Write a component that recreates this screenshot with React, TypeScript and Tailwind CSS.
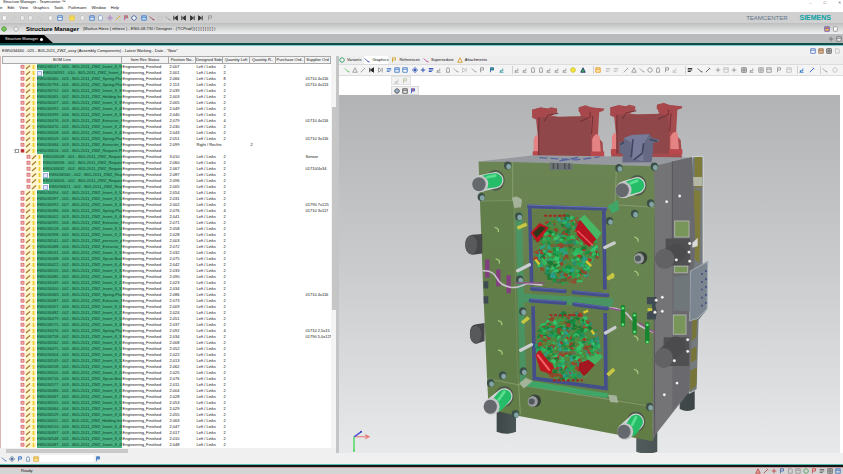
import { useState } from "react";

const suppliers: Record<number, string> = {
  2: "01710 4x116", 3: "01710 4x113", 9: "01710 4x116", 12: "01710 3x116", 15: "Sensor", 17: "01710/4x34",
  23: "01790 7x125", 24: "01710 3x117", 38: "01710 4x116", 44: "01710 2,5x15", 45: "01790 5,0x125",
};

const positions = [
  "2.007", "2.001", "2.066", "2.113", "2.039", "2.003", "2.005", "2.049", "2.040", "2.079", "2.030", "2.043", "2.051",
  "2.099", "", "3.010", "2.060", "2.067", "2.087", "2.096", "2.005", "2.054", "2.031", "2.002", "2.076", "2.041",
  "2.071", "2.058", "2.028", "2.003", "2.072", "2.032", "2.075", "2.042", "2.033", "2.090", "2.023", "2.034", "2.086",
  "2.073", "2.009", "2.024", "2.051", "2.037", "2.092", "2.034", "2.008", "2.052", "2.022", "2.013", "2.062", "2.025",
  "2.076", "2.011", "2.004", "2.028", "2.053", "2.029", "2.055", "2.063", "2.047", "2.017", "2.010", "2.048", "2.021",
];

const names = [
  "34517 - 005 - B05-2011_ZWZ_Insert_fl_96", "34392 - 010 - B05-2011_ZWZ_Insert_fl", "34460 - 003 - B05-2011_ZWZ_Spring-Plug",
  "31793 - 001 - B05-2011_ZWZ_Spring-Plug", "34752 - 002 - B05-2011_ZWZ_Insert_fl_38", "34465 - 002 - B05-2011_ZWZ_Holding Ins",
  "34427 - 005 - B05-2011_ZWZ_Insert_fl_39", "34392 - 003 - B05-2011_ZWZ_Insert_fl_48", "34399 - 006 - B05-2011_ZWZ_Insert_fl_36",
  "34476 - 003 - B05-2011_ZWZ_Extractor_fl", "34470 - 002 - B05-2011_ZWZ_Insert_fl_29", "34508 - 003 - B05-2011_ZWZ_Insert_fl_42",
  "34509 - 002 - B05-2011_ZWZ_Spring-Plug", "34464 - 003 - B05-2011_ZWZ_Extractor_fl", "34616 - 002 - B05-2011_ZWZ_Request-Pl",
  "34538 - 001 - B05-2011_ZWZ_Request", "34596 - 002 - B05-2011_ZWZ_Request", "34632 - 002 - B05-2011_ZWZ_Request",
  "34560 - 002 - B05-2011_ZWZ_Reque", "34626 - 002 - B05-2011_ZWZ_Request", "34621 - 002 - B05-2011_ZWZ_Reque",
  "34494 - 002 - B05-2011_ZWZ_Insert_fl_52", "34397 - 005 - B05-2011_ZWZ_Insert_fl_54", "34392 - 007 - B05-2011_ZWZ_Insert_fl_31",
  "34486 - 003 - B05-2011_ZWZ_Spring-Plug", "34402 - 003 - B05-2011_ZWZ_Insert_fl_40", "34395 - 004 - B05-2011_ZWZ_Extractor_fl",
  "34518 - 004 - B05-2011_ZWZ_Insert_fl_58", "34398 - 002 - B05-2011_ZWZ_Insert_fl_27", "34541 - 002 - B05-2011_ZWZ_pressure_pl",
  "34488 - 004 - B05-2011_ZWZ_Extractor_fl", "34531 - 003 - B05-2011_ZWZ_Insert_fl_31", "34468 - 003 - B05-2011_ZWZ_Sprue-Bush",
  "34422 - 002 - B05-2011_ZWZ_Insert_fl_41", "34555 - 002 - B05-2011_ZWZ_Insert_fl_32", "34485 - 002 - B05-2011_ZWZ_Insert_fl_39",
  "34449 - 002 - B05-2011_ZWZ_Insert_fl_22", "34400 - 002 - B05-2011_ZWZ_Insert_fl_33", "34463 - 003 - B05-2011_ZWZ_Spring-Plug",
  "34487 - 002 - B05-2011_ZWZ_Extractor_fl", "34457 - 003 - B05-2011_ZWZ_Insert_fl_08", "34482 - 002 - B05-2011_ZWZ_Insert_fl_23",
  "34479 - 002 - B05-2011_ZWZ_Insert_fl_50", "34575 - 002 - B05-2011_ZWZ_Insert_fl_36", "34476 - 002 - B05-2011_ZWZ_Spring-Plug",
  "34758 - 002 - B05-2011_ZWZ_Insert_fl_33", "34562 - 005 - B05-2011_ZWZ_Insert_fl_07", "34475 - 004 - B05-2011_ZWZ_Insert_fl_51",
  "34404 - 002 - B05-2011_ZWZ_Insert_fl_21", "34549 - 002 - B05-2011_ZWZ_Insert_fl_12", "34558 - 002 - B05-2011_ZWZ_Insert_fl_61",
  "34505 - 006 - B05-2011_ZWZ_Insert_fl_24", "34716 - 003 - B05-2011_ZWZ_Sprue-Bush", "34577 - 003 - B05-2011_ZWZ_Insert_fl_10",
  "34480 - 002 - B05-2011_ZWZ_Insert_fl_03", "34467 - 002 - B05-2011_ZWZ_Insert_fl_25", "34555 - 003 - B05-2011_ZWZ_Insert_fl_52",
  "34464 - 004 - B05-2011_ZWZ_Insert_fl_28", "34529 - 002 - B05-2011_ZWZ_Insert_fl_02", "34411 - 002 - B05-2011_ZWZ_Holding Ins",
  "34510 - 003 - B05-2011_ZWZ_Insert_fl_46", "34497 - 003 - B05-2011_ZWZ_Insert_fl_16", "34548 - 002 - B05-2011_ZWZ_Insert_fl_09",
  "34487 - 002 - B05-2011_ZWZ_Insert_fl_45",
];

const menus = ["File", "Edit", "View", "Graphics", "Tools", "Pathmann", "Window", "Help"];

const shapes: Record<string, string> = {
  page: "M2 1h4l1 1v5H2z",
  box: "M1 1h6v6H1zM1 3h6",
  pen: "M1 7l5-5M5 1l2 2",
  line: "M1 2l3 3 3 2M6 6h1",
  circle: "M4 1a3 3 0 1 0 .1 0",
  cross: "M4 1v6M1 4h6",
  move: "M4 0v8M0 4h8M2 2l4 4M6 2l-4 4",
  arrow: "M1 5h4V2M3 5l-2 2h5",
  arch: "M2 7V3a2 2 0 0 1 4 0v4H2",
  prev: "M1 1v6M6 1L2 4l4 3z",
  next: "M7 1v6M2 1l4 3-4 3z",
  grid: "M1 1h6v6H1zM4 1v6M1 4h6",
  flag: "M2 7V1h4v3H2",
  bars: "M1 2h6M1 4h6M1 6h4",
  tri: "M1 7l3-6 3 6z",
};

type Item = [string, string, string?];

function Glyph({ kind, color, fill }: { kind: string; color: string; fill?: string }) {
  return (
    <svg viewBox="0 0 8 8" className="size-[6px] shrink-0" fill={fill || "none"} stroke={color} strokeWidth="1.2">
      <path d={shapes[kind]} />
    </svg>
  );
}

function Tools({ items, className }: { items: Item[]; className: string }) {
  return (
    <div className={"flex shrink-0 items-center " + className}>
      {items.map(([kind, color, fill], i) => (
        <button key={i} type="button" aria-label={kind} className="flex h-2 w-2 shrink-0 items-center justify-center">
          <Glyph kind={kind} color={color} fill={fill} />
        </button>
      ))}
    </div>
  );
}

const G = "#9a9a9a";
const L = "#c3c3c3";
const B = "#4b7dc4";

const mainTools: { cls: string; items: Item[] }[] = [
  { cls: "", items: [["page", L, "#fff"]] },
  { cls: "ml-0.5", items: [["pen", L], ["page", L, "#eee"], ["page", L, "#eee"]] },
  { cls: "ml-0.5", items: [["line", L]] },
  { cls: "ml-0.5", items: [["page", L, "#f5f5f5"]] },
  { cls: "ml-0.5", items: [["box", B, "#fff"]] },
  { cls: "ml-1", items: [["box", "#e3c74e", "#ffe25c"]] },
  { cls: "ml-0.5", items: [["page", L, "#eee"]] },
  { cls: "ml-0.5", items: [["box", B, "#dfe9f7"], ["page", "#86a5d4", "#fff"]] },
  { cls: "ml-0.5", items: [["move", "#b08cc4"], ["pen", "#dca82e"], ["flag", "#c55b9c", "#8dad53"], ["circle", "#375b99", "#fff"]] },
  { cls: "ml-0.5", items: [["box", B, "#bcdcf5"], ["line", "#a63946"], ["circle", L], ["line", G]] },
  { cls: "", items: [["prev", "#333", "#333"], ["prev", "#333", "#333"], ["next", "#333", "#333"], ["next", "#333", "#333"]] },
  { cls: "ml-0.5", items: [["flag", G]] },
];

const viewTools: { cls: string; items: Item[] }[] = [
  { cls: "ml-1", items: [["line", "#5fbf62"], ["tri", G], ["pen", G]] },
  { cls: "ml-px", items: [["prev", "#222", "#222"], ["next", G]] },
  { cls: "ml-px", items: [["bars", B], ["box", B, "#e5eefc"], ["box", B, "#fff"]] },
  { cls: "ml-0.5", items: [["move", "#3558b5"], ["cross", "#244bb5"], ["bars", "#244bb5"], ["arrow", G]] },
  { cls: "ml-px", items: [["arch", G], ["line", G], ["next", L]] },
  { cls: "ml-0.5", items: [["line", G], ["flag", G]] },
  { cls: "ml-0.5", items: [["flag", "#2f69aa", "#42ad5a"]] },
  { cls: "ml-0.5", items: [["arrow", "#3c9aa7"]] },
  { cls: "ml-1.5 border-l border-[#d0d0d0]", items: [["arrow", G], ["arrow", G], ["arch", G], ["arch", G], ["arrow", G], ["arrow", G], ["arrow", G], ["circle", "#c7ba23", "#f7ec3d"]] },
  { cls: "ml-0.5", items: [["tri", "#263f77", "#38a950"]] },
  { cls: "ml-1.5 border-l border-[#d0d0d0]", items: [["box", "#e5a03b", "#ffe9a8"]] },
  { cls: "ml-0.5", items: [["bars", L], ["bars", L]] },
  { cls: "ml-0.5", items: [["pen", G], ["tri", G], ["line", G], ["circle", G], ["arch", G]] },
  { cls: "ml-px", items: [["flag", G], ["arrow", L]] },
  { cls: "ml-1.5 border-l border-[#d0d0d0]", items: [["bars", "#222"]] },
  { cls: "ml-0.5", items: [["line", "#555"], ["pen", "#555"]] },
  { cls: "ml-0.5", items: [["cross", G], ["box", L], ["cross", G]] },
  { cls: "ml-0.5", items: [["grid", "#777"], ["arrow", G]] },
  { cls: "ml-px", items: [["grid", G], ["box", G]] },
  { cls: "ml-0.5", items: [["flag", G]] },
  { cls: "ml-0.5", items: [["box", L]] },
  { cls: "ml-1 border-l border-[#d0d0d0]", items: [["arrow", "#2d79c8"]] },
  { cls: "ml-0.5", items: [["pen", "#2d5fc8"]] },
  { cls: "ml-1 border-l border-[#d0d0d0]", items: [["line", G]] },
  { cls: "ml-0.5", items: [["circle", L]] },
];

const tabs: [string, string, string][] = [
  ["Variants", "circle", "#2b9c63"],
  ["Graphics", "line", "#3146b5"],
  ["References", "flag", "#d0a72e"],
  ["Supersedure", "line", "#bb4796"],
  ["Attachments", "tri", "#d99c29"],
];

function BomRow({ index }: { index: number }) {
  const child = index > 14 && index < 21;
  const marked = index === 1 || index === 18 || index === 20;
  const right = index === 13;
  const blank = index === 14;
  return (
    <tr className="h-[6px] leading-[6px]">
      <td className="p-0">
        <div className={"flex h-[6px] items-center " + (child ? "pl-[23px]" : "pl-[11px]")}>
          {!child && (
            <span className="flex w-[6px] shrink-0 items-center border-l border-dotted border-[#c8c8c8]">
              {blank && <span className="size-1 border border-[#999] bg-white" />}
            </span>
          )}
          <svg viewBox="0 0 17 6" className="h-[6px] w-[17px] shrink-0">
            <rect x="1" y="1.2" width="3" height="3" fill={blank ? "#b02027" : "#f0b3b3"} stroke="#d25a5a" strokeWidth="0.7" />
            <rect x="5" y="0" width="11" height="6" fill="#fff8cf" />
            <path d="M6 5l4-3.5" stroke="#a97a35" strokeWidth="1.3" />
            <path d="M13.500 1v4" stroke="#f0cc2c" strokeWidth="1.800" />
          </svg>
          {marked && <span className="mr-px size-[5px] shrink-0 border border-[#9fb0e0] bg-[#e4eafc]" />}
          <span className="h-[6px] min-w-0 flex-1 overflow-hidden whitespace-nowrap bg-[#48b283] text-[#0b3a25]">
            {"EW00" + names[index]}
          </span>
        </div>
      </td>
      <td className="p-0 pl-px whitespace-nowrap">Engineering_Finished</td>
      <td className="p-0 pl-px">{positions[index]}</td>
      <td className="p-0 pl-px whitespace-nowrap">{blank ? "" : right ? "Right / Rechts" : "Left / Links"}</td>
      <td className="p-0 pl-px">{blank || right ? "" : index === 2 ? "8" : [9, 24, 44].includes(index) ? "4" : "2"}</td>
      <td className="p-0 pl-px">{right ? "2" : ""}</td>
      <td className="p-0" />
      <td className="p-0 pl-px whitespace-nowrap">{suppliers[index]}</td>
    </tr>
  );
}

// small repeatable generator, so the cavity clutter looks the same on each render
function scatter(seed: number, count: number) {
  let s = seed;
  const rnd = () => {
    s = (s * 16807) % 2147483647;
    return s / 2147483647;
  };
  const palette = ["#21a552", "#2fb85f", "#179044", "#35c26b", "#2a8f6b", "#5d7f35", "#8a4a2b", "#a3402a", "#2aa08c", "#1c7a34"];
  return Array.from({ length: count }, () => {
    const a = rnd() * Math.PI * 2;
    const r = Math.pow(rnd(), 0.5);
    const x = Math.cos(a) * r * 96;
    const y = Math.sin(a) * r * 104;
    const w = 6 + rnd() * 18;
    const h = 3 + rnd() * 6;
    return { x, y, w, h, rot: rnd() * 80 - 60, color: palette[Math.floor(rnd() * palette.length)] };
  });
}

function Cavity({ cx, cy, seed }: { cx: number; cy: number; seed: number }) {
  return (
    <g transform={`translate(${cx} ${cy})`}>
      <ellipse rx="82" ry="94" fill="#4f8a45" />
      {scatter(seed, 420).map((p, i) => (
        <path
          key={i}
          d={`M${-p.w / 2} 0L0 ${-p.h}L${p.w / 2} ${-p.h / 3}L${p.w / 4} ${p.h}Z`}
          transform={`translate(${p.x} ${p.y}) rotate(${p.rot})`}
          fill={p.color}
        />
      ))}
    </g>
  );
}

function Pin({ x, y, dx, dy }: { x: number; y: number; dx: number; dy: number }) {
  return (
    <g strokeLinecap="round">
      <ellipse cx={x + dx} cy={y + dy} rx="28" ry="31" fill="#4d5a48" />
      <path d={`M${x} ${y}L${x + dx} ${y + dy}`} stroke="#cfd3d3" strokeWidth="49" />
      <path d={`M${x + 15} ${y - 5}L${x + dx} ${y + dy}`} stroke="#26bd68" strokeWidth="42" />
      <path d={`M${x + 18} ${y - 18}L${x + dx} ${y + dy - 14}`} stroke="#5be092" strokeWidth="8" />
      <ellipse cx={x - 3} cy={y + 2} rx="24" ry="25" fill="#c3c5c7" />
      <ellipse cx={x - 7} cy={y + 3} rx="20" ry="21" fill="#65696d" />
    </g>
  );
}

function Clamp() {
  return (
    <g>
      <path d="M248 62l25-7 22 3 10-4 18 4v12l-18 9 22 4 66-2 2-9-8-6 1-12 20-6 20 7 36 3-2 7-13 4-4 75 14 15 4 56H250l6-60 10-7-6-57-12-5z" fill="#a54a4d" />
      <path d="M268 84l154-2 4 118H266z" fill="#90474a" />
      <path d="M248 62l25-7 22 3-10 22-21 10zM388 54l20-2 54 8-34 15-4 18-32-18z" fill="#a8484c" />
      <path d="M284 96l12-18 30-6M392 97l30-14V68" fill="none" stroke="#703237" strokeWidth="3" />
      <path d="M253 150q8-20 14-8v45h-14zM428 150q10-23 22-10l4 48h-26z" fill="#e58384" />
      <path d="M250 187h18v15h-18zM424 187h40v15h-40z" fill="#b9474c" />
      <path d="M268 84v116M430 80l-4 55" stroke="#6e3338" strokeWidth="3" />
    </g>
  );
}

function MouldModel() {
  return (
    <svg viewBox="340 96 500 357" preserveAspectRatio="xMidYMid meet" className="h-full w-full" role="img" aria-label="Mould assembly">
      <defs>
        <linearGradient id="leg" x1="0" x2="1">
          <stop offset="0" stopColor="#3d4748" />
          <stop offset="0.35" stopColor="#6e797a" />
          <stop offset="1" stopColor="#3c4445" />
        </linearGradient>
        <linearGradient id="face" x1="0" y1="0" x2="0" y2="1">
          <stop offset="0" stopColor="#6b8453" />
          <stop offset="1" stopColor="#617c45" />
        </linearGradient>
      </defs>
      <g transform="translate(450 90) scale(0.33333)">
        {/* legs and rear columns */}
        <path d="M142 960h58v66q-29 12-58 0zM560 1020h63v66q-31 10-63 0zM690 900h45v58q-22 12-45 0z" fill="url(#leg)" />
        <path d="M728 203h32v330h14l-2 128-24 30-6 208-24 12z" fill="#747a7d" stroke="#eceded" strokeWidth="2" />
        <path d="M735 203h22v92h-22zM733 300l20 6-4 215-16-15z" fill="#7f7b3b" />
        <path d="M730 263h28v27h-28z" fill="#b5b7a6" />
        <path d="M722 690l20-8-2 60-20 18zM720 780l20-10v40l-20 10zM718 845l24-12-2 55-22 16z" fill="#77753a" />
        <Clamp />
        <g transform="translate(234 -7)"><Clamp /></g>
        {/* block */}
        <path d="M88 217l165-19 475 7-113 27z" fill="#969a9e" />
        <path d="M270 205l110 7 70-9M330 215l60-11" stroke="#5663a2" strokeWidth="4" fill="none" strokeDasharray="24 9" />
        <path d="M613 230l114-26 10 240-17 460-102 130-10 20z" fill="#747477" />
        <path d="M668 217l60-13 8 240-18 460-50 60z" fill="#6a6a6e" />
        <path d="M668 217v280M613 375l2 660" stroke="#56565a" strokeWidth="3" />
        <path d="M88 217l102 1 423 13 2 120-6 703-404-76-87-19-5-100-13-301-8-225z" fill="url(#face)" />
        <path d="M190 219v115l-95 2M193 334l10 470 10 170M113 867l88 17 400 65M501 226l-5 120 118 8" fill="none" stroke="#95a780" strokeWidth="2" />
        <path d="M93 336l100-2 20 547-98-16z" fill="#5e7d47" opacity="0.6" />
        <path d="M482 350l132 5-8 590-126-22z" fill="#668550" opacity="0.8" />
        <path d="M198 370l20-2 12 505-18 10zM212 612l280 15-5 26-270-15z" fill="#419a69" opacity="0.75" />
        <path d="M238 872l240 39-6 14-248-36zM475 350l30-18 4 30-22 10z" fill="#3fa668" />
        <path d="M301 220l68 3v19h-68z" fill="#6c7376" />
        <path d="M312 222v17M325 222v17M346 222v17M359 222v17" stroke="#454b4c" strokeWidth="4" />

        {/* cavities */}
        <path d="M248 360l212 5 2 260-214-12z" fill="#647d48" />
        <path d="M250 640l216 19v230l-208-28z" fill="#647d48" />
        <path d="M234 351l238 8M241 352l6 236M463 360l3 240" stroke="#434e8b" strokeWidth="11" fill="none" />
        <path d="M235 347l237 8" stroke="#6873b2" strokeWidth="3" />
        <path d="M248 598l98 7M372 608l102 9M244 633l102 7M374 644l98 13" stroke="#434e8b" strokeWidth="12" strokeLinecap="round" />
        <path d="M248 594l98 7M372 604l102 9M244 629l102 7M374 640l98 13" stroke="#6773b4" strokeWidth="2" />
        <path d="M251 650l4 216 214 30-2-226" stroke="#434e8b" strokeWidth="11" fill="none" />
        <Cavity cx={350} cy={480} seed={431} />
        <Cavity cx={356} cy={770} seed={977} />
        <path d="M243 430l28-29 27 14-34 45z" fill="#bd1621" />
        <path d="M251 430l22-20 16 6-27 28z" fill="#30361a" />
        <path d="M378 419l18-38 56 55-33 37-32-30z" fill="#b5131f" />
        <path d="M389 388l16-12 51 55-14 20z" fill="#47b763" />
        <path d="M384 424l46 44" stroke="#f25562" strokeWidth="4" />
        <path d="M258 795l13-13 42 50-9 21-31-10z" fill="#bd1720" />
        <path d="M264 795l37 48" stroke="#f8636b" strokeWidth="6" />
        <path d="M389 820l34-12 18 13-37 39-16-18z" fill="#a31720" />
        <path d="M410 805l43-12 8 8-25 24z" fill="#42b461" />
        <path d="M284 379h74M300 677h92M310 872h90" stroke="#9c2b23" strokeWidth="6" strokeDasharray="9 5" />
        <path d="M302 468h70M320 573h60M327 790h54" stroke="#8a4d31" strokeWidth="10" opacity="0.6" />
        <path d="M258 510l12 15M410 515l15 15M402 669l14-6M426 722l8 12" stroke="#d7c92d" strokeWidth="7" />

        {/* guide pins, screws and connectors */}
        <Pin x={96} y={282} dx={42} dy={-9} />
        <Pin x={525} y={300} dx={38} dy={-12} />
        <Pin x={130} y={948} dx={35} dy={-28} />
        <Pin x={530} y={1023} dx={29} dy={-27} />
        {[[175, 229], [96, 323], [508, 236], [614, 232], [603, 342], [555, 373], [160, 857], [124, 880], [600, 951], [198, 973], [208, 381], [211, 570], [220, 665], [222, 845], [480, 395]].map(([x, y]) => (
          <g key={x + "-" + y}>
            <ellipse cx={x} cy={y} rx="11" ry="12" fill="#3c4f48" />
            <ellipse cx={x + 3} cy={y + 3} rx="7" ry="8" fill="#83a5a5" />
          </g>
        ))}
        {[[143, 420], [146, 514], [561, 449], [561, 551], [560, 745], [560, 845], [153, 699], [154, 787]].map(([x, y]) => (
          <path key={x + "-" + y} d={`M${x - 7} ${y - 6}q14 3 11 14`} stroke="#a3c87b" strokeWidth="4" fill="none" />
        ))}
        {[[568, 507], [250, 935]].map(([x, y]) => (
          <g key={x}>
            <circle cx={x + 6} cy={y - 2} r="19" fill="#394238" />
            <ellipse cx={x} cy={y} rx="15" ry="16" fill="#9a9d9f" />
            <circle cx={x - 3} cy={y} r="9" fill="#52595c" />
          </g>
        ))}
        <path d="M205 544l35-18M466 474l28-13M214 782l32-17M468 730l28-16" stroke="#c9cdcd" strokeWidth="10" strokeLinecap="round" />
        <path d="M204 416l28-12M474 568l19-15M218 700l20-16M474 856l20-18M473 568l20-8" stroke="#c6c643" strokeWidth="11" />
        <path d="M188 326q13-12 30 6l-3 22-20 2zM210 880l20-16 20 10-27 22zM476 915l25 2 5 22-24-2z" fill="#a5b29a" />
        <path d="M114 510v55M147 540v50M178 557v54" stroke="#823f80" strokeWidth="13" />
        <path d="M100 544q30-3 42 21t45 29q25 0 44-12l48 5M480 655q42 2 60 27t72 46" stroke="#c9bfce" strokeWidth="5" fill="none" />
        <path d="M196 580h90M480 656l40 8M570 700l46 30" stroke="#904d8c" strokeWidth="4" />
        <path d="M520 653v52M555 675v53M593 704v51" stroke="#16852e" strokeWidth="13" strokeLinecap="round" />
        {[[520, 656], [520, 705], [555, 677], [555, 727], [593, 706], [593, 757]].map(([x, y]) => (
          <circle key={x + "-" + y} cx={x} cy={y} r="4" fill="#63e37e" />
        ))}

        {/* side knobs */}
        <path d="M99 434v58l-28 4q-23-3-23-31 0-25 21-29zM106 700v54l-24 8q-20-2-20-31 0-25 19-27z" fill="#454648" />
        <ellipse cx="66" cy="466" rx="18" ry="28" fill="#58595b" />
        <ellipse cx="79" cy="735" rx="17" ry="27" fill="#58595b" />
        <path d="M648 447h73v80h-73zM642 743h76v86h-76z" fill="#505053" />
        <path d="M675 395h43v48h-43zM674 530h40v20h-40zM671 676h38v58h-38z" fill="#78955a" stroke="#aab0a5" strokeWidth="3" />
        <path d="M648 507l34-18M646 801l35-33" stroke="#4b4b4e" strokeWidth="54" strokeLinecap="round" />
        <ellipse cx="645" cy="508" rx="29" ry="30" fill="#626265" />
        <ellipse cx="642" cy="805" rx="28" ry="30" fill="#626265" />
        <path d="M722 545l52-29-2 142-28 28-24 8z" fill="#7b858f" stroke="#a3abb2" strokeWidth="3" />
        <path d="M672 562l48-5v108l-48-2z" fill="#70777b" />
        <path d="M592 622h28l5 12-8 12 5 20-4 24h-26v-20l15-8v-18h-15zM103 575h14v22h-14zM103 620h14v22h-14z" fill="#404a52" />
        <path d="M594 660h14" stroke="#d3c737" strokeWidth="8" />
        {[[651, 337], [690, 320], [638, 623], [638, 665], [644, 915], [682, 880], [680, 511], [718, 488], [720, 515], [714, 750], [714, 785], [674, 813], [620, 632], [616, 668], [720, 462]].map(([x, y]) => (
          <circle key={x + "-" + y} cx={x} cy={y} r="5" fill="#f4f4f4" stroke="#444" strokeWidth="1" />
        ))}
        {[553, 577, 600, 624, 648].map((y) => (
          <path key={y} d={`M754 ${y}h5M766 ${y - 8}h5`} stroke="#3a4c87" strokeWidth="5" />
        ))}
        <path d="M728 460l16-15v25l-16 5z" fill="#d8d9d9" />
        <path d="M523 146l24-9 52-2 10 12 21 4-2 6-17 4-2 36-3 22-88 1 2-24-10-5v-33h12z" fill="#666983" />
        <path d="M523 146l24-9 52-2-16 26-2 55-35-8-3-50z" fill="#777b99" />
        <path d="M550 150l-5 54M582 162l-4 30-25 20M512 166l12-8M600 150l22 6" stroke="#41455d" strokeWidth="5" fill="none" />
      </g>
      {/* orientation triad */}
      <path d="M355 437h14M366 435l4 2-4 2" stroke="#e57373" strokeWidth="1" fill="none" />
      <path d="M355 437l7-5" stroke="#5257d4" strokeWidth="1.500" />
      <path d="M355 437v14" stroke="#53da64" strokeWidth="1.500" />
      <circle cx="362" cy="432" r="1" fill="#4045c8" />
      <circle cx="355" cy="451" r="1" fill="#39cf4d" />
    </svg>
  );
}

export default function App() {
  const [tab, setTab] = useState("Graphics");
  const [search, setSearch] = useState("");

  return (
    <div className="flex h-screen w-full flex-col overflow-hidden bg-[#f0f0f0] font-['Liberation_Sans',Arial,sans-serif] text-[4px] leading-[6px] text-[#111]">
      <header className="shrink-0">
        <div className="flex h-1 justify-between overflow-hidden bg-white pr-0.5 pl-[3px] leading-[3px]">
          <span>Structure Manager - Teamcenter ™</span>
          <span className="flex gap-3 text-[#555]">
            <button type="button" aria-label="Minimize">–</button>
            <button type="button" aria-label="Restore">□</button>
            <button type="button" aria-label="Close">✕</button>
          </span>
        </div>
        <nav className="-ml-1 flex h-2 items-center gap-[5px] bg-white">
          {menus.map((m) => (
            <button key={m} type="button">{m}</button>
          ))}
        </nav>
        <div className="flex h-[11px] items-center bg-[#d0d0d1] pr-3">
          {mainTools.map((g, i) => (
            <Tools key={i} items={g.items} className={g.cls} />
          ))}
          <span className="ml-auto text-[6px] text-[#5f7488]">TEAMCENTER</span>
          <span className="ml-3 text-[7px] font-bold text-[#0aa0a4]">SIEMENS</span>
        </div>
        <div className="flex h-[11px] items-center bg-linear-to-b from-[#bdbebf] to-[#f1f1f1] pr-1">
          <Tools items={[["circle", "#4d9b3b", "#7cc45b"]]} className="" />
          <Tools items={[["circle", "#aaa", "#eee"]]} className="ml-1" />
          <h1 className="ml-[6px] text-[6px] font-bold whitespace-nowrap text-black">Structure Manager</h1>
          <span className="ml-1 whitespace-nowrap">(Markus Hiess ( mhiess ) - ENG-08-TSI / Designer - ('TCProd')) [ ] [ ] [ ] [ ] )</span>
          <Tools items={[["box", "#6b59b5", "#f5b054"], ["page", G, "#fff"]]} className="ml-auto" />
        </div>
        <div className="flex h-[11px] items-end justify-between border-b-2 border-[#124d4c] bg-[#b9bbbc]">
          <div className="flex h-2 w-[53px] items-center bg-black pl-[5px] text-white [clip-path:polygon(0_0,44px_0,100%_100%,0_100%)]">
            <span className="whitespace-nowrap">Structure Manager</span>
            <button type="button" aria-label="Close tab" className="ml-0.5 size-[3px] rounded-full bg-white" />
          </div>
          <Tools items={[["cross", "#777"], ["box", "#777", "#eee"]]} className="" />
        </div>
      </header>

      <div className="flex h-[11px] shrink-0 items-center justify-between border-t border-[#7ccaca] bg-[#f1f1f1] px-0.5">
        <span>EW0034460 - 025 - B05-2011_ZWZ_assy (Assembly Components) - Latest Working - Date - "Now"</span>
        <Tools items={[["box", "#567bc4", "#fff"], ["box", "#9c7757", "#dfb995"], ["grid", "#555"], ["page", L]]} className="" />
      </div>

      <main className="flex min-h-0 flex-1">
        <section className="flex w-[339px] shrink-0 flex-col border-r-3 border-[#c3c5c7] bg-white">
          <div className="flex min-h-0 flex-1">
            <div className="min-w-0 flex-1 overflow-hidden border-l border-[#d9b5b5] pl-px">
              <table className="w-full table-fixed border-collapse">
                <thead>
                  <tr className="h-[7px] bg-[#f3f3f3] leading-[6px]">
                    <th className="w-[119px] border border-[#aaa] p-0 font-normal">BOM Line</th>
                    <th className="w-[47px] border border-[#aaa] p-0 font-normal">Item Rev Status</th>
                    <th className="w-[27px] border border-[#aaa] p-0 font-normal whitespace-nowrap">Position No..</th>
                    <th className="w-[27px] border border-[#aaa] p-0 font-normal whitespace-nowrap">Designed Side</th>
                    <th className="w-[27px] border border-[#aaa] p-0 font-normal whitespace-nowrap">Quantity Left</th>
                    <th className="w-[26px] border border-[#aaa] p-0 font-normal whitespace-nowrap">Quantity R..</th>
                    <th className="w-[29px] border border-[#aaa] p-0 font-normal whitespace-nowrap">Purchase Ord..</th>
                    <th className="border border-[#aaa] p-0 font-normal whitespace-nowrap">Supplier Ord</th>
                  </tr>
                </thead>
                <tbody>
                  {names.map((n, i) => (
                    <BomRow key={i} index={i} />
                  ))}
                </tbody>
              </table>
            </div>
            <div className="flex w-[5px] shrink-0 flex-col items-center bg-[#f4f4f4] pt-[51px]">
              <div className="h-[203px] w-1 bg-[#c6c6c6]" />
            </div>
          </div>
          <div className="flex h-[5px] shrink-0 items-center bg-[#f0f0f0] pl-[6px]">
            <div className="h-1 w-[122px] bg-[#c9c9c9]" />
          </div>
        </section>

        <section className="flex min-w-0 flex-1 flex-col bg-white">
          <div className="flex h-2 shrink-0 items-center gap-[3px] bg-[#eeeeee]" role="tablist">
            {tabs.map(([name, kind, color]) => (
              <button
                key={name}
                type="button"
                role="tab"
                aria-selected={tab === name}
                onClick={() => setTab(name)}
                className={"flex h-2 items-center gap-0.5 " + (tab === name ? "bg-white" : "")}
              >
                <Glyph kind={kind} color={color} />
                {name}
              </button>
            ))}
          </div>
          <div className="flex h-3 shrink-0 items-center overflow-hidden border-y border-[#dcdcdc] bg-[#f4f4f4]">
            {viewTools.map((g, i) => (
              <Tools key={i} items={g.items} className={g.cls} />
            ))}
          </div>
          <div className="flex shrink-0 flex-col items-start gap-px pl-[52px]">
            <Tools items={[["arrow", L], ["flag", "#b8c7a6"]]} className="h-[9px] border border-[#e2e2e2] bg-[#f3f3f3] px-px" />
            <Tools items={[["circle", "#555", "#9db3ce"], ["box", "#555"], ["flag", "#4159cc", "#e76b55"]]} className="h-[9px] border border-[#dcdcdc] bg-[#f0f0f0] px-px" />
          </div>
          <div className="mr-[3px] min-h-0 flex-1 bg-linear-to-b from-[#b1b3b5] via-[#cbcccd] to-[#e8e9ea]">
            <MouldModel />
          </div>
        </section>
      </main>

      <footer className="shrink-0">
        <div className="flex h-[11px] items-center bg-[#f0f0f0]">
          <Tools
            items={[["line", B], ["move", "#537399"], ["flag", B, "#bcd3ed"], ["arch", "#7f9abb"], ["box", "#d6ae46", "#ffe793"]]}
            className=""
          />
          <input
            aria-label="Find"
            value={search}
            onChange={(e) => setSearch(e.target.value)}
            className="h-[7px] w-[54px] bg-white px-px outline-none"
          />
          <Tools items={[["flag", "#4f82c4", "#4f82c4"]]} className="" />
        </div>
        <div className="h-[3px] border-t border-[#55bdb1] bg-[#151515]" />
        <div className="flex h-[7px] items-center justify-between border-t border-[#c79a9f] bg-[#d4d4d4]">
          <span className="pl-[21px]">Ready</span>
          <Tools
            items={[["tri", "#c0504d", "#e9a19d"], ["pen", "#b84d4d"], ["cross", "#b84d4d"], ["flag", "#4c72b0"], ["page", G], ["box", G], ["circle", "#57a35b"], ["flag", "#c94f4f"], ["bars", "#666"], ["grid", "#666"], ["box", B]]}
            className="pr-px"
          />
        </div>
      </footer>
    </div>
  );
}
